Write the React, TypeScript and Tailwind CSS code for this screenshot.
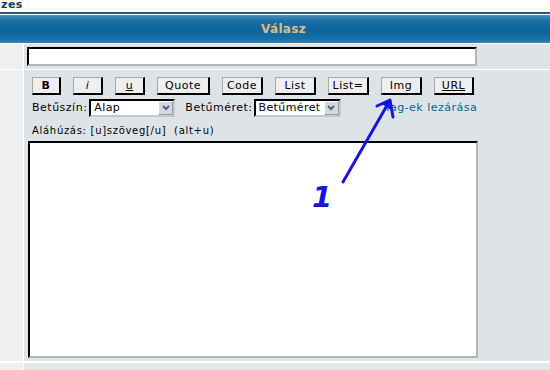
const buttons: { label: string; w: string; cls?: string }[] = [
  { label: "B", w: "w-[29px]", cls: "font-bold" },
  { label: "i", w: "w-[30px]", cls: "italic" },
  { label: "u", w: "w-[30px]", cls: "underline" },
  { label: "Quote", w: "w-[53px]" },
  { label: "Code", w: "w-[41px]" },
  { label: "List", w: "w-[41px]" },
  { label: "List=", w: "w-[41px]" },
  { label: "Img", w: "w-[41px]" },
  { label: "URL", w: "w-[40px]", cls: "underline" },
];

function FakeSelect({ value, w }: { value: string; w: string }) {
  return (
    <div className={`${w} flex h-[18px] border-2 border-t-black border-l-black border-b-[#c8c8c8] border-r-[#c8c8c8] bg-white`}>
      <div className="flex-1 overflow-hidden whitespace-nowrap pl-[3px] text-[11px] leading-[14px] tracking-[0.4px]">{value}</div>
      <div className="flex w-[15px] items-center justify-center border border-t-white border-l-white border-b-[#9a9a9a] border-r-[#9a9a9a] bg-[#d8d8dc]">
        <svg viewBox="0 0 8 6" className="h-[6px] w-[8px]">
          <path d="M1 1 L4 4 L7 1" fill="none" stroke="#4d6185" strokeWidth="2" />
        </svg>
      </div>
    </div>
  );
}

export default function App() {
  return (
    <div className="relative flex h-[370px] w-[550px] flex-col overflow-hidden bg-white font-['DejaVu_Sans',sans-serif] text-[11px] text-black">
      <div className="h-[12px] pl-[1px] text-[11px] font-bold leading-[10px] tracking-[0.5px] text-[#0d3e60]">zes</div>
      <div className="h-[2px] bg-[#1f5d84]" />
      <div className="h-[1px] bg-white" />
      <div className="flex h-[28px] items-center justify-center bg-[linear-gradient(to_bottom,#4b90bb_0%,#1a71a5_20%,#0a669c_55%,#1d71a6_88%,#3a85b5_100%)] pl-[17px] text-[12px] font-bold tracking-[0.3px] text-[#e6b87f]">
        Válasz
      </div>
      <div className="h-[1px] bg-white" />

      <div className="flex h-[25px]">
        <div className="w-[24px] border-r border-white bg-[#efefef]" />
        <div className="flex-1 bg-[#dee3e7] pl-[3px] pt-[3px]">
          <div className="h-[19px] w-[450px] border-2 border-t-black border-l-black border-b-[#b4b4b4] border-r-[#b4b4b4] bg-white" />
        </div>
      </div>
      <div className="h-[1px] bg-white" />

      <div className="flex h-[291px]">
        <div className="w-[24px] border-r border-white bg-[#efefef]" />
        <div className="flex flex-1 flex-col bg-[#dee3e7] pl-[4px] pt-[7px]">
          <div className="ml-[4px] flex h-[18px] gap-[12px]">
            {buttons.map((b) => (
              <div
                key={b.label}
                className={`${b.w} flex items-center justify-center border-t border-l border-r-2 border-b-2 border-t-[#a8a8a8] border-l-[#a8a8a8] border-r-black border-b-black bg-[#efefef] text-[11px] leading-none tracking-[0.5px] ${b.cls ?? ""}`}
              >
                {b.label}
              </div>
            ))}
          </div>

          <div className="ml-[4px] mt-[4px] flex h-[18px] items-center tracking-[0.5px]">
            <span>Betűszín:</span>
            <div className="ml-[2px]">
              <FakeSelect value="Alap" w="w-[86px]" />
            </div>
            <span className="ml-[10px]">Betűméret:</span>
            <div className="ml-[1px]">
              <FakeSelect value="Betűméret" w="w-[87px]" />
            </div>
            <span className="ml-[44px] text-[#006699]">Tag-ek lezárása</span>
          </div>

          <div className="ml-[4px] mt-[7px] h-[13px] whitespace-nowrap text-[10px] leading-[13px] tracking-[0.7px]">Aláhúzás: [u]szöveg[/u]&nbsp; (alt+u)</div>

          <div className="mt-[4px] h-[217px] w-[450px] border-2 border-t-black border-l-black border-b-[#b4b4b4] border-r-[#b4b4b4] bg-white" />
        </div>
      </div>
      <div className="h-[2px] bg-white" />
      <div className="flex flex-1">
        <div className="w-[24px] border-r border-white bg-[#efefef]" />
        <div className="flex-1 bg-[#e4e8eb]" />
      </div>

      <svg className="pointer-events-none absolute left-0 top-0 h-[370px] w-[550px]" viewBox="0 0 550 370">
        <path d="M343 182 L389 102" stroke="#1414e6" strokeWidth="3" fill="none" strokeLinecap="round" />
        <path d="M377 106 L390 100 L393 117" stroke="#1414e6" strokeWidth="3" fill="none" strokeLinejoin="round" strokeLinecap="round" />
        <path d="M382 104 L390 101 L391 110 Z" fill="#1414e6" />
      </svg>
      <div className="pointer-events-none absolute left-[312px] top-[180px] text-[29px] font-bold italic leading-[34px] text-[#1414e6]">1</div>
    </div>
  );
}
